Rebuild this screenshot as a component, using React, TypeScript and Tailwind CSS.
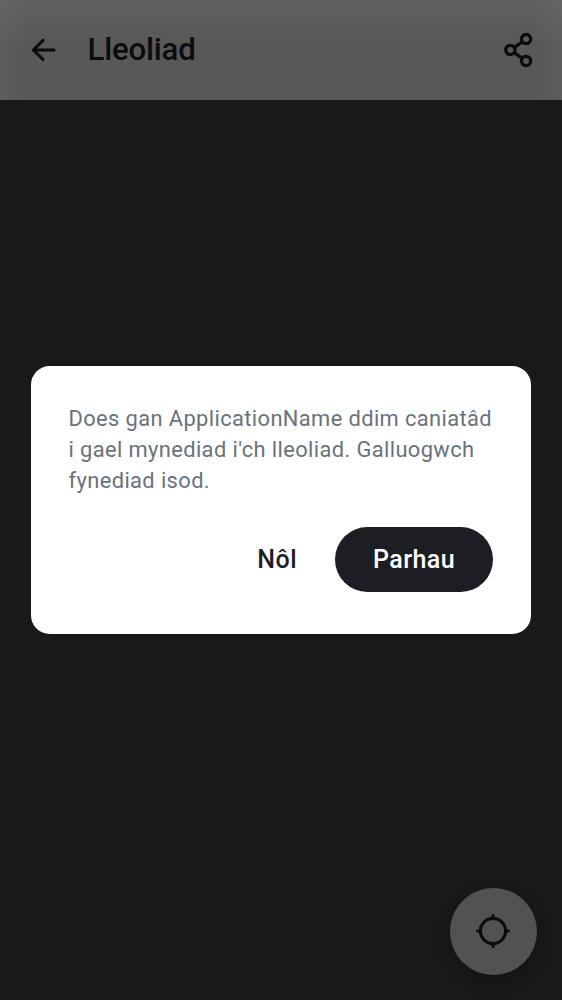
import React from "react";

function BackIcon() {
  return (
    <svg width="26" height="24" viewBox="0 0 26 24" fill="none" stroke="#0b0c0e" strokeWidth="3.1" strokeLinecap="round" strokeLinejoin="round">
      <path d="M12 2.4 2.4 12l9.6 9.5M2.4 12h20.6" />
    </svg>
  );
}

function ShareIcon() {
  return (
    <svg width="30" height="36" viewBox="0 0 30 36" fill="none" stroke="#0b0c0e" strokeWidth="3.3">
      <circle cx="22.1" cy="7.1" r="4.6" />
      <circle cx="6.4" cy="18" r="4.6" />
      <circle cx="22.1" cy="29" r="4.6" />
      <path d="m10.3 15.3 8-5.5M10.3 20.7l8 5.6" />
    </svg>
  );
}

function LocateIcon() {
  return (
    <svg width="36" height="36" viewBox="0 0 36 36" fill="none" stroke="#0b0c0e" strokeWidth="3.1" strokeLinecap="round">
      <circle cx="18" cy="18" r="12.6" />
      <path d="M18 2.6v3M18 30.4v3M2.6 18h3M30.4 18h3" />
    </svg>
  );
}

export default function App() {
  return (
    <div className="relative flex h-[1000px] w-[562px] flex-col overflow-hidden bg-[#191919] font-['Roboto','Liberation_Sans',sans-serif]">
      <header className="flex h-[100px] shrink-0 items-center bg-[#585858] bg-[linear-gradient(to_bottom,rgba(255,255,255,0.05),rgba(255,255,255,0)_45%),linear-gradient(to_right,rgba(255,255,255,0.03),rgba(255,255,255,0)_5%,rgba(255,255,255,0)_95%,rgba(255,255,255,0.03))] pr-[28px] pl-[31px]">
        <button aria-label="Yn ôl" className="shrink-0"><BackIcon /></button>
        <h1 className="ml-[30.5px] flex-1 text-[31.25px] leading-9 font-medium tracking-[-0.2px] text-[#0b0c0e]">Lleoliad</h1>
        <button aria-label="Rhannu" className="shrink-0"><ShareIcon /></button>
      </header>

      <button aria-label="Fy lleoliad" className="absolute right-[25px] bottom-[25px] flex size-[87.5px] items-center justify-center rounded-full bg-[#525252] shadow-[0_6px_16px_rgba(0,0,0,0.25)]">
        <LocateIcon />
      </button>

      <div className="absolute inset-0 flex items-center justify-center">
        <section role="dialog" className="h-[268.75px] w-[500px] rounded-[18.75px] bg-white px-[37.5px] pt-[37.5px]">
          <p className="text-[21.875px] leading-[31px] tracking-[0.39px] whitespace-nowrap text-[#6a727c]">
            Does gan ApplicationName ddim caniatâd<br />
            i gael mynediad i'ch lleoliad. Galluogwch<br />
            fynediad isod.
          </p>
          <div className="mt-[30.75px] flex h-[65px] items-center justify-end gap-[38px] pr-[0.5px] text-[25px] font-medium tracking-[0.45px]">
            <button className="text-[#1d1e24]">Nôl</button>
            <button className="h-full w-[158px] rounded-full bg-[#1d1e24] text-white">Parhau</button>
          </div>
        </section>
      </div>
    </div>
  );
}
